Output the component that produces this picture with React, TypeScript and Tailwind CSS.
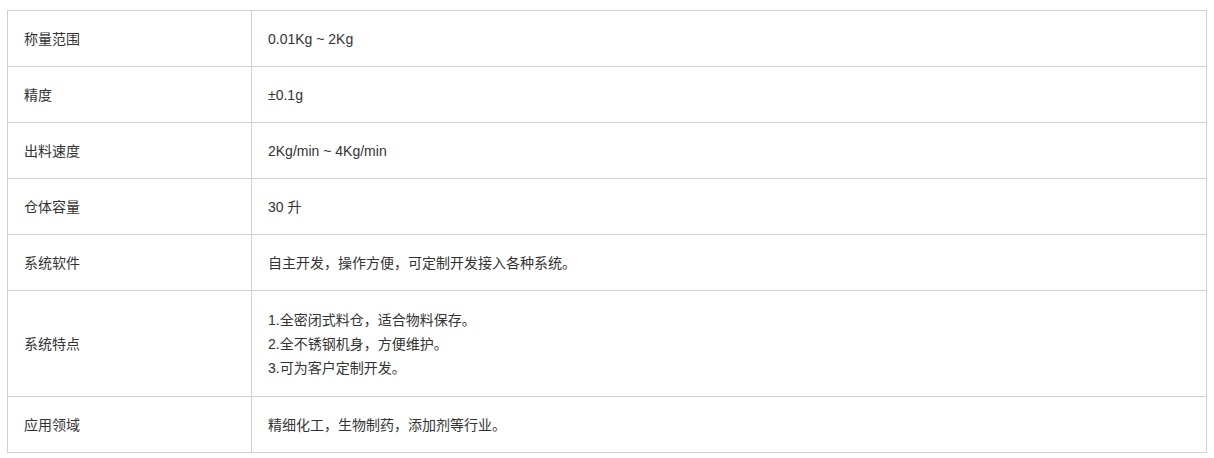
const rows: { label: string; value: string[] }[] = [
  { label: "称量范围", value: ["0.01Kg ~ 2Kg"] },
  { label: "精度", value: ["±0.1g"] },
  { label: "出料速度", value: ["2Kg/min ~ 4Kg/min"] },
  { label: "仓体容量", value: ["30 升"] },
  { label: "系统软件", value: ["自主开发，操作方便，可定制开发接入各种系统。"] },
  {
    label: "系统特点",
    value: ["1.全密闭式料仓，适合物料保存。", "2.全不锈钢机身，方便维护。", "3.可为客户定制开发。"],
  },
  { label: "应用领域", value: ["精细化工，生物制药，添加剂等行业。"] },
];

export default function App() {
  return (
    <div
      className="bg-white min-h-[458px] pt-[10px] pl-[7px] text-[#333] text-[14px]"
      style={{ fontFamily: '"Liberation Sans", "Noto Sans CJK SC", sans-serif' }}
    >
      <table className="w-[1200px] border-collapse table-fixed">
        <colgroup>
          <col className="w-[244px]" />
          <col />
        </colgroup>
        <tbody>
          {rows.map((r) => {
            const multi = r.value.length > 1;
            return (
              <tr key={r.label}>
                <td
                  className={`border border-[#d0d0d0] px-[16px] align-middle leading-[24px] ${
                    multi ? "h-[106px]" : "h-[56px]"
                  }`}
                >
                  {r.label}
                </td>
                <td className="border border-[#d0d0d0] px-[16px] align-middle leading-[24px]">
                  {r.value.map((v) => (
                    <div key={v}>{v}</div>
                  ))}
                </td>
              </tr>
            );
          })}
        </tbody>
      </table>
    </div>
  );
}
